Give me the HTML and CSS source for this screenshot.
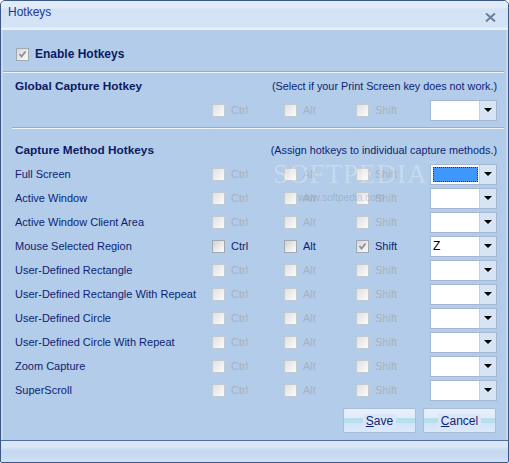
FILE: index.html
```html
<!DOCTYPE html>
<html>
<head>
<meta charset="utf-8">
<title>Hotkeys</title>
<link rel="stylesheet" href="styles.css">
</head>
<body>
<div class="window">
  <div class="titlebar">
    <span class="title">Hotkeys</span>
    <svg class="close" width="11" height="9" viewBox="0 0 11 9">
      <path d="M1 0.5 L10 8.5 M10 0.5 L1 8.5" stroke="#eef4fc" stroke-width="2.6" fill="none" transform="translate(0,0.8)"/>
      <path d="M1 0.5 L10 8.5 M10 0.5 L1 8.5" stroke="#6b7f9f" stroke-width="2.2" fill="none"/>
    </svg>
  </div>
  <div class="content">
    <div class="enable-row">
      <span class="cb checked"><svg width="11" height="11" viewBox="0 0 11 11"><path d="M2.5 5 L4.5 7.5 L8.5 2.5" stroke="#8a9099" stroke-width="1.8" fill="none"/></svg></span>
      <span class="enable-label">Enable Hotkeys</span>
    </div>
    <div class="sep sep-first"></div>

    <div class="group-head head-global">
      <span class="heading">Global Capture Hotkey</span>
      <span class="hint">(Select if your Print Screen key does not work.)</span>
    </div>
    <div class="row row-global">
      <span class="name"></span>
      <span class="opt off"><span class="cb dis"></span>Ctrl</span>
      <span class="opt off"><span class="cb dis"></span>Alt</span>
      <span class="opt off"><span class="cb dis"></span>Shift</span>
      <span class="combo"><span class="val"></span><span class="arrow"><i></i></span></span>
    </div>
    <div class="sep sep-second"></div>

    <div class="group-head head-method">
      <span class="heading">Capture Method Hotkeys</span>
      <span class="hint">(Assign hotkeys to individual capture methods.)</span>
    </div>
    <div class="rows">
      <div class="row">
        <span class="name">Full Screen</span>
        <span class="opt off"><span class="cb dis"></span>Ctrl</span>
        <span class="opt off"><span class="cb dis"></span>Alt</span>
        <span class="opt off"><span class="cb dis"></span>Shift</span>
        <span class="combo"><span class="val focus"><b></b></span><span class="arrow"><i></i></span></span>
      </div>
      <div class="row">
        <span class="name">Active Window</span>
        <span class="opt off"><span class="cb dis"></span>Ctrl</span>
        <span class="opt off"><span class="cb dis"></span>Alt</span>
        <span class="opt off"><span class="cb dis"></span>Shift</span>
        <span class="combo"><span class="val"></span><span class="arrow"><i></i></span></span>
      </div>
      <div class="row">
        <span class="name">Active Window Client Area</span>
        <span class="opt off"><span class="cb dis"></span>Ctrl</span>
        <span class="opt off"><span class="cb dis"></span>Alt</span>
        <span class="opt off"><span class="cb dis"></span>Shift</span>
        <span class="combo"><span class="val"></span><span class="arrow"><i></i></span></span>
      </div>
      <div class="row">
        <span class="name">Mouse Selected Region</span>
        <span class="opt"><span class="cb"></span>Ctrl</span>
        <span class="opt"><span class="cb"></span>Alt</span>
        <span class="opt"><span class="cb checked"><svg width="11" height="11" viewBox="0 0 11 11"><path d="M2.5 5 L4.5 7.5 L8.5 2.5" stroke="#8a9099" stroke-width="1.8" fill="none"/></svg></span>Shift</span>
        <span class="combo"><span class="val text">Z</span><span class="arrow"><i></i></span></span>
      </div>
      <div class="row">
        <span class="name">User-Defined Rectangle</span>
        <span class="opt off"><span class="cb dis"></span>Ctrl</span>
        <span class="opt off"><span class="cb dis"></span>Alt</span>
        <span class="opt off"><span class="cb dis"></span>Shift</span>
        <span class="combo"><span class="val"></span><span class="arrow"><i></i></span></span>
      </div>
      <div class="row">
        <span class="name">User-Defined Rectangle With Repeat</span>
        <span class="opt off"><span class="cb dis"></span>Ctrl</span>
        <span class="opt off"><span class="cb dis"></span>Alt</span>
        <span class="opt off"><span class="cb dis"></span>Shift</span>
        <span class="combo"><span class="val"></span><span class="arrow"><i></i></span></span>
      </div>
      <div class="row">
        <span class="name">User-Defined Circle</span>
        <span class="opt off"><span class="cb dis"></span>Ctrl</span>
        <span class="opt off"><span class="cb dis"></span>Alt</span>
        <span class="opt off"><span class="cb dis"></span>Shift</span>
        <span class="combo"><span class="val"></span><span class="arrow"><i></i></span></span>
      </div>
      <div class="row">
        <span class="name">User-Defined Circle With Repeat</span>
        <span class="opt off"><span class="cb dis"></span>Ctrl</span>
        <span class="opt off"><span class="cb dis"></span>Alt</span>
        <span class="opt off"><span class="cb dis"></span>Shift</span>
        <span class="combo"><span class="val"></span><span class="arrow"><i></i></span></span>
      </div>
      <div class="row">
        <span class="name">Zoom Capture</span>
        <span class="opt off"><span class="cb dis"></span>Ctrl</span>
        <span class="opt off"><span class="cb dis"></span>Alt</span>
        <span class="opt off"><span class="cb dis"></span>Shift</span>
        <span class="combo"><span class="val"></span><span class="arrow"><i></i></span></span>
      </div>
      <div class="row">
        <span class="name">SuperScroll</span>
        <span class="opt off"><span class="cb dis"></span>Ctrl</span>
        <span class="opt off"><span class="cb dis"></span>Alt</span>
        <span class="opt off"><span class="cb dis"></span>Shift</span>
        <span class="combo"><span class="val"></span><span class="arrow"><i></i></span></span>
      </div>
    </div>

    <div class="buttons">
      <span class="btn"><span class="btn-label"><u>S</u>ave</span></span>
      <span class="btn"><span class="btn-label"><u>C</u>ancel</span></span>
    </div>
  </div>
  <div class="statusbar"></div>

  <div class="watermark">SOFTPEDIA<sup>™</sup></div>
  <div class="watermark-url">www.softpedia.com</div>
</div>
</body>
</html>
```

FILE: styles.css
```css
html, body {
  margin: 0;
  padding: 0;
  background: #ffffff;
}

body {
  font-family: "Liberation Sans", Arial, sans-serif;
  font-size: 11px;
  color: #0d1f72;
}

.window {
  position: relative;
  width: 509px;
  height: 463px;
  box-sizing: border-box;
  border: 1px solid #3b5886;
  border-radius: 5px 5px 2px 2px;
  background: #b2cce9;
  display: flex;
  flex-direction: column;
  overflow: hidden;
}

.titlebar {
  height: 29px;
  flex: none;
  box-sizing: border-box;
  display: flex;
  align-items: flex-start;
  padding: 4px 12px 0 7px;
  background: linear-gradient(#e2ebf8 0, #e2ebf8 7px, #d3e2f5 8px, #d4e3f6 26px, #e9f1fc 27px, #e9f1fc 29px);
}

.title {
  font-size: 12px;
  line-height: 14px;
  color: #1b3a8e;
}

.close {
  margin-left: auto;
  margin-top: 8px;
}

.content {
  flex: 1;
  box-sizing: border-box;
  border-left: 2px solid #c6d9f0;
  border-right: 2px solid #c6d9f0;
  padding: 0 9px 0 12px;
  display: flex;
  flex-direction: column;
}

.enable-row {
  margin-top: 18px;
  margin-left: 1px;
  height: 13px;
  display: flex;
  align-items: center;
}

.enable-label {
  font-weight: bold;
  font-size: 12px;
  line-height: 13px;
  color: #0b1a62;
}

.sep {
  height: 1px;
  border-top: 1px solid #a2acb9;
  background: #eef3fa;
  margin-right: -7px;
}

.sep-first {
  margin-top: 10px;
  margin-left: -12px;
}

.sep-second {
  margin-top: 5px;
  margin-left: -3px;
}

.group-head {
  height: 14px;
  display: flex;
  justify-content: space-between;
  align-items: baseline;
  line-height: 14px;
}

.head-global {
  margin-top: 6px;
}

.head-method {
  margin-top: 14px;
}

.heading {
  font-weight: bold;
  font-size: 11.8px;
  color: #0b1a62;
}

.hint {
  font-size: 10.8px;
  color: #0d1f72;
}

.row {
  height: 24px;
  display: grid;
  grid-template-columns: 197px 72px 72px 74px 67px;
  align-items: center;
}

.row-global {
  margin-top: 5px;
}

.rows {
  margin-top: 5px;
}

.name {
  font-size: 11px;
  white-space: nowrap;
  color: #0d1f72;
}

.opt {
  display: flex;
  align-items: center;
  font-size: 11px;
  color: #0d1f72;
}

.opt.off {
  color: #abb2bd;
}

.cb {
  width: 13px;
  height: 13px;
  flex: none;
  box-sizing: border-box;
  border: 1px solid #a1a8b1;
  background: linear-gradient(135deg, #d0d0d0 0%, #f2f2f2 70%, #fbfbfb 100%);
  margin-right: 6px;
  display: flex;
  align-items: center;
  justify-content: center;
}

.cb.dis {
  border-color: #c4cad2;
  background: linear-gradient(135deg, #dedede 0%, #f4f4f4 70%, #fcfcfc 100%);
}

.cb.checked {
  background: linear-gradient(135deg, #d6d6d6 0%, #f0f0f0 70%, #f8f8f8 100%);
}

.combo {
  height: 21px;
  width: 67px;
  box-sizing: border-box;
  border: 1px solid #a4b7d2;
  background: #ffffff;
  display: flex;
}

.val {
  flex: 1;
  box-sizing: border-box;
  font-size: 12px;
  line-height: 19px;
  color: #000000;
  padding-left: 2px;
}

.val.focus {
  padding: 2px 1px 2px 2px;
}

.val.focus b {
  display: block;
  height: 100%;
  box-sizing: border-box;
  border: 1px dotted #4a3510;
  background: #3d97fc;
}

.arrow {
  width: 17px;
  flex: none;
  box-sizing: border-box;
  border-left: 1px solid #c2d1e6;
  background: #d7e4f5;
  display: flex;
  align-items: center;
  justify-content: center;
}

.arrow i {
  width: 0;
  height: 0;
  border-left: 4px solid transparent;
  border-right: 4px solid transparent;
  border-top: 4px solid #000000;
}

.buttons {
  margin-top: 6px;
  margin-right: 1px;
  display: flex;
  justify-content: flex-end;
  gap: 7px;
}

.btn {
  width: 73px;
  height: 25px;
  box-sizing: border-box;
  border: 1px solid #a6bddc;
  border-radius: 2px;
  background: linear-gradient(#e8f0fc 0%, #e1ebf9 37%, #b8e0ec 38%, #b8e0ec 61%, #d2e3f8 62%, #dce9fb 100%);
  display: flex;
  align-items: center;
  justify-content: center;
}

.btn-label {
  font-size: 12px;
  line-height: 14px;
  padding: 0 3px;
  background: #d9e7f8;
  color: #0d2578;
}

.statusbar {
  height: 22px;
  flex: none;
  box-sizing: border-box;
  border-top: 1px solid #506f9d;
  background: linear-gradient(#dce8f8 0, #d8e6f7 6px, #c4d8f1 10px, #c8dbf2 16px, #d3e2f6 21px);
}

.watermark {
  position: absolute;
  left: 272px;
  top: 158px;
  font-family: "Liberation Serif", serif;
  font-size: 27px;
  letter-spacing: 1px;
  color: rgba(255, 255, 255, 0.28);
  pointer-events: none;
}

.watermark sup {
  font-size: 9px;
  vertical-align: top;
}

.watermark-url {
  position: absolute;
  left: 297px;
  top: 191px;
  font-size: 10px;
  color: rgba(120, 130, 150, 0.35);
  pointer-events: none;
}
```
